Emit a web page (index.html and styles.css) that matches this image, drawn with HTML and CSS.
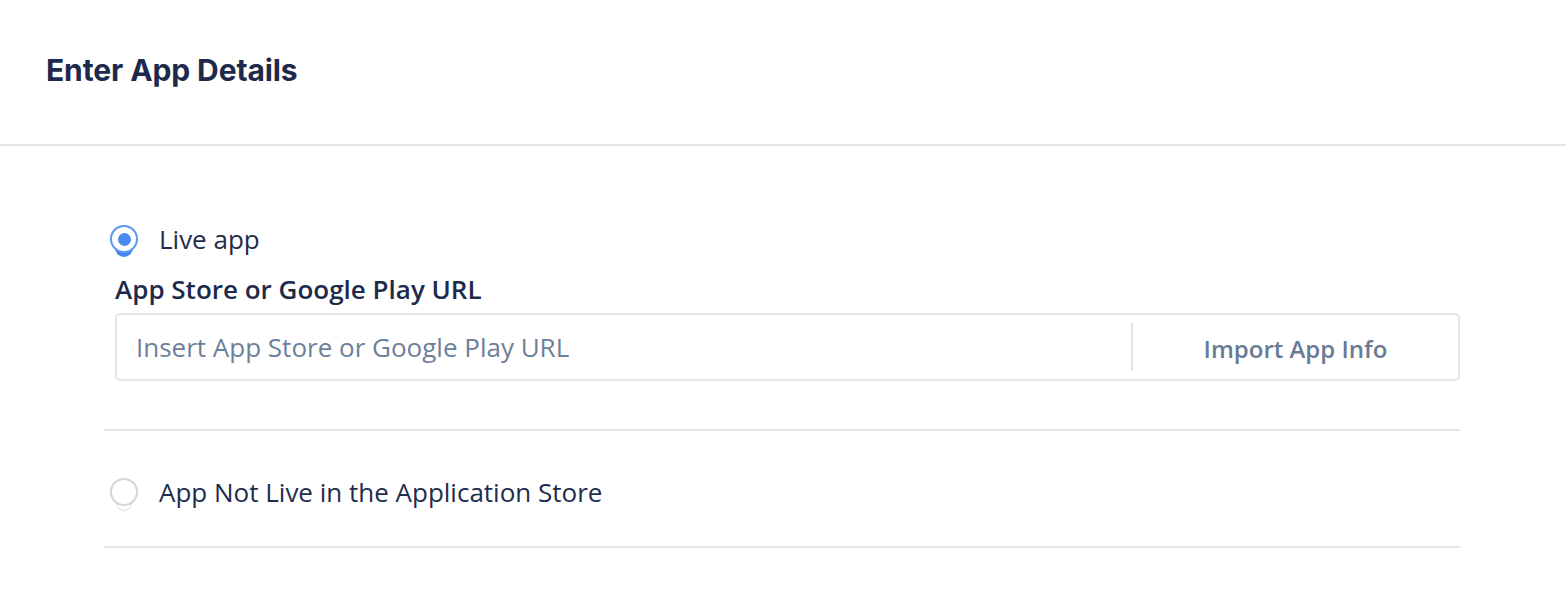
FILE: index.html
```html
<!DOCTYPE html>
<html lang="en">
<head>
<meta charset="utf-8">
<title>Enter App Details</title>
<link rel="stylesheet" href="styles.css">
</head>
<body>
<header class="page-header">
  <h1 class="page-title">Enter App Details</h1>
</header>
<main class="options">
  <section class="option option-live">
    <label class="radio-row">
      <span class="radio radio-checked"><span class="radio-shadow"></span><span class="radio-ring"><span class="radio-dot"></span></span></span>
      <span class="radio-label">Live app</span>
    </label>
    <div class="field">
      <div class="field-label">App Store or Google Play URL</div>
      <div class="field-box">
        <div class="field-input">Insert App Store or Google Play URL</div>
        <div class="field-divider"></div>
        <div class="field-button">Import App Info</div>
      </div>
    </div>
  </section>
  <section class="option option-notlive">
    <label class="radio-row">
      <span class="radio"><span class="radio-shadow"></span><span class="radio-ring"></span></span>
      <span class="radio-label">App Not Live in the Application Store</span>
    </label>
  </section>
</main>
</body>
</html>
```
FILE: styles.css
```css
* { box-sizing: border-box; }
html, body { margin: 0; padding: 0; background: #ffffff; }
body {
  font-family: "Open Sans", "Noto Sans", sans-serif;
  color: #1f2c4c;
  width: 1566px;
}
.page-header {
  height: 146px;
  border-bottom: 2px solid #e2e6ea;
  display: flex;
  align-items: center;
  padding: 0 46px 4px;
}
.page-title {
  margin: 0;
  font-family: "Inter", "Liberation Sans", Arial, sans-serif;
  font-weight: 700;
  font-size: 30px;
  color: #1d2a4b;
  letter-spacing: -0.1px;
}
.options {
  margin-left: 104px;
  width: 1356px;
  padding-top: 30px;
}
.option {
  border-bottom: 2px solid #e2e6ea;
}
.option-live { padding: 48px 0 48px; }
.option-notlive { padding: 46px 0 39px; }
.radio-row {
  display: flex;
  align-items: center;
  height: 30px;
  padding-left: 6px;
  gap: 21px;
}
.radio {
  position: relative;
  width: 28px;
  height: 28px;
  flex: none;
}
.radio-ring {
  position: relative;
  z-index: 1;
  width: 28px;
  height: 28px;
  border-radius: 50%;
  border: 2px solid #cfd5dd;
  background: #ffffff;
  display: flex;
  align-items: center;
  justify-content: center;
}
.radio-shadow {
  position: absolute;
  left: 6px;
  top: 17px;
  width: 16px;
  height: 16px;
  border-radius: 50%;
  border: 1px solid #d6dbe1;
  background: #ffffff;
}
.radio-checked .radio-ring {
  border: 2.5px solid #5b98f2;
}
.radio-checked .radio-shadow {
  left: 5px;
  top: 14px;
  width: 18px;
  height: 18px;
  border: none;
  background: #4585ec;
}
.radio-dot {
  width: 13px;
  height: 13px;
  border-radius: 50%;
  background: #4a89ee;
}
.radio-label {
  font-size: 26px;
  line-height: 30px;
  color: #1f2c4c;
}
.field {
  margin-left: 11px;
  padding-top: 20px;
}
.field-label {
  font-size: 26px;
  line-height: 30px;
  font-weight: 600;
  color: #1d2a4b;
  margin-bottom: 9px;
}
.field-box {
  display: flex;
  align-items: center;
  height: 68px;
  border: 2px solid #e2e6ea;
  border-radius: 5px;
  padding: 8px 0;
}
.field-input {
  flex: 1;
  padding-left: 19px;
  font-size: 26px;
  color: #6d809a;
}
.field-divider {
  width: 2px;
  align-self: stretch;
  background: #e2e6ea;
}
.field-button {
  width: 325px;
  text-align: center;
  font-size: 24px;
  font-weight: 600;
  color: #687b94;
  padding-top: 2px;
}
```
